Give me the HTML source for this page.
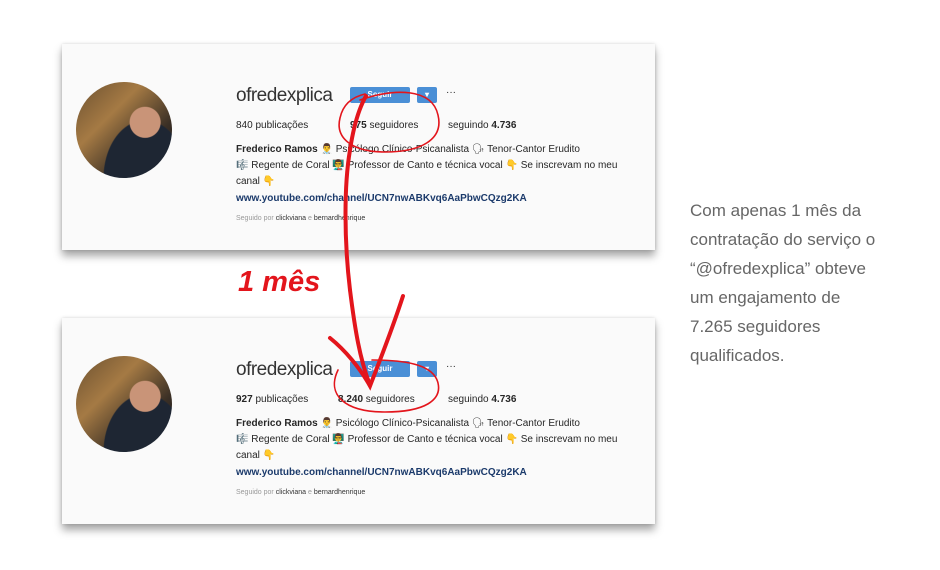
<!DOCTYPE html>
<html><head><meta charset="utf-8"><style>
body{margin:0;width:940px;height:570px;background:#fff;position:relative;overflow:hidden;font-family:"Liberation Sans",sans-serif}
.card{position:absolute;left:62px;width:593px;height:206px;background:#fafafa;box-shadow:0 6px 8px rgba(0,0,0,.35),0 0 3px rgba(0,0,0,.15)}
.av{position:absolute;left:14px;top:38px;width:96px;height:96px;border-radius:50%;background:radial-gradient(circle at 72% 42%,#c99478 0 17%,transparent 18%),radial-gradient(ellipse at 72% 100%,#1e2633 0 42%,transparent 43%),linear-gradient(135deg,#6b5030,#a57a44 35%,#3a2f25 70%,#1a1a20)}
.t{position:absolute;left:174px;white-space:nowrap;color:#262626;font-size:10px}
.u{font-size:19px;font-weight:300;color:#333;letter-spacing:-.5px}
.btn{position:absolute;background:#4a8fd6;border-radius:2px;color:#fff;font-size:8px;font-weight:bold;text-align:center;line-height:16px}
b{font-weight:bold}
.link{color:#1b3a6b;font-weight:bold}
.s{font-size:7px;color:#999}
.side{position:absolute;left:690px;top:196px;color:#666;font-size:17px;line-height:29px}
</style></head><body>
<div class="card" style="top:44px">
<div class="av"></div>
<div class="t u" style="top:41px">ofredexplica</div>
<div class="btn" style="left:288px;top:43px;width:60px;height:16px">Seguir</div>
<div class="btn" style="left:355px;top:43px;width:20px;height:16px">▾</div>
<div class="t" style="left:384px;top:43px">···</div>
<div class="t" style="top:76px">840 publicações</div>
<div class="t" style="left:288px;top:76px"><b>975</b> seguidores</div>
<div class="t" style="left:386px;top:76px">seguindo <b>4.736</b></div>
<div class="t" style="top:100px"><b>Frederico Ramos</b> 👨‍⚕️ Psicólogo Clínico-Psicanalista 🗣 Tenor-Cantor Erudito</div>
<div class="t" style="top:116px">🎼 Regente de Coral 👨‍🏫 Professor de Canto e técnica vocal 👇 Se inscrevam no meu</div>
<div class="t" style="top:132px">canal 👇</div>
<div class="t link" style="top:149px">www.youtube.com/channel/UCN7nwABKvq6AaPbwCQzg2KA</div>
<div class="t s" style="top:171px">Seguido por <span style="color:#333">clickviana</span> e <span style="color:#333">bernardhenrique</span></div>
</div>
<div class="card" style="top:318px">
<div class="av"></div>
<div class="t u" style="top:41px">ofredexplica</div>
<div class="btn" style="left:288px;top:43px;width:60px;height:16px">Seguir</div>
<div class="btn" style="left:355px;top:43px;width:20px;height:16px">▾</div>
<div class="t" style="left:384px;top:43px">···</div>
<div class="t" style="top:76px"><b>927</b> publicações</div>
<div class="t" style="left:276px;top:76px"><b>8.240</b> seguidores</div>
<div class="t" style="left:386px;top:76px">seguindo <b>4.736</b></div>
<div class="t" style="top:100px"><b>Frederico Ramos</b> 👨‍⚕️ Psicólogo Clínico-Psicanalista 🗣 Tenor-Cantor Erudito</div>
<div class="t" style="top:116px">🎼 Regente de Coral 👨‍🏫 Professor de Canto e técnica vocal 👇 Se inscrevam no meu</div>
<div class="t" style="top:132px">canal 👇</div>
<div class="t link" style="top:149px">www.youtube.com/channel/UCN7nwABKvq6AaPbwCQzg2KA</div>
<div class="t s" style="top:171px">Seguido por <span style="color:#333">clickviana</span> e <span style="color:#333">bernardhenrique</span></div>
</div>
<div style="position:absolute;left:238px;top:266px;color:#e3151c;font-size:29px;font-weight:bold;font-style:italic">1 mês</div>
<svg style="position:absolute;left:0;top:0" width="940" height="570">
<g fill="none" stroke="#e3151c" stroke-linecap="round">
<path d="M360 100 C395 88 432 88 438 115 C444 140 420 152 385 152 C352 152 335 138 340 118 C343 104 352 97 365 94" stroke-width="1.6"/>
<path d="M338 370 C326 395 345 412 385 412 C425 412 442 400 438 383 C434 366 410 360 372 360" stroke-width="1.6"/>
<path d="M350 290 C344 240 344 185 350 150 C353 130 358 110 366 96" stroke-width="4"/>
<path d="M350 290 C355 330 360 360 370 385" stroke-width="4"/>
<path d="M330 338 C345 350 360 368 370 386 C380 360 392 330 403 296" stroke-width="4"/>
</g></svg>
<div class="side">Com apenas 1 mês da<br>contratação do serviço o<br>“@ofredexplica” obteve<br>um engajamento de<br>7.265 seguidores<br>qualificados.</div>
</body></html>
